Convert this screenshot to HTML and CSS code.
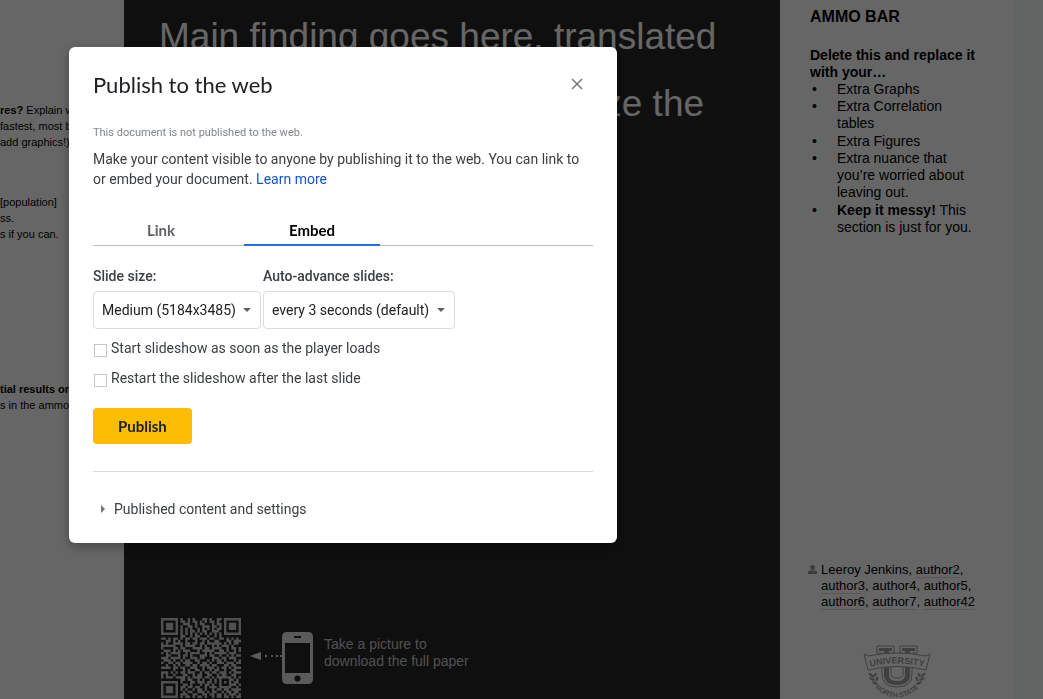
FILE: index.html
```html
<!DOCTYPE html>
<html lang="en">

<head>
    <meta charset="UTF-8">
    <meta name="viewport" content="width=device-width, initial-scale=1.0">
    <title>Publish to the web</title>
    <link rel="stylesheet" href="styles.css">
</head>

<body>

    <!-- Poster slide -->
    <main class="slide">
        <section class="intro-bar">
            <p class="note"><b>res?</b> Explain w<br>fastest, most br<br>add graphics!).</p>
            <p class="note">[population]<br>ss.<br>s if you can.</p>
            <p class="note"><b>tial results on</b><br>s in the ammo</p>
        </section>

        <section class="finding">
            <h1>Main finding goes here, translated<br>into plain English. Emphasize the</h1>
            <div class="download">
                <svg id="qr" class="qr" viewBox="0 0 33 33" aria-label="QR code"></svg>
                <svg class="arrow" viewBox="0 0 32 10">
                    <path d="M0 5L11 1V9Z" />
                    <path d="M15 4h2v2h-2zM21 4h2v2h-2zM26 4h2v2h-2zM30 4h2v2h-2z" />
                </svg>
                <svg class="phone" viewBox="0 0 31 52">
                    <path fill-rule="evenodd" d="M5 0H26Q31 0 31 5V47Q31 52 26 52H5Q0 52 0 47V5Q0 0 5 0ZM3 11V41H28V11ZM12 4V6H19V4ZM15.500 43.500A3 3 0 1 0 15.500 49.500A3 3 0 1 0 15.500 43.500Z" />
                </svg>
                <p>Take a picture to<br>download the full paper</p>
            </div>
        </section>

        <section class="ammo-bar">
            <h2>AMMO BAR</h2>
            <h3>Delete this and replace it with your…</h3>
            <ul>
                <li>Extra Graphs</li>
                <li>Extra Correlation tables</li>
                <li>Extra Figures</li>
                <li>Extra nuance that you’re worried about leaving out.</li>
                <li><b>Keep it messy!</b> This section is just for you.</li>
            </ul>
            <div class="authors">
                <svg class="person" viewBox="0 0 9 10">
                    <circle cx="4.500" cy="2.500" r="2.500" />
                    <path d="M0 9V7Q0 5.500 2 5.500H7Q9 5.500 9 7V9Z" />
                </svg>
                <p>Leeroy Jenkins, <u>author2</u>, <u>author3</u>, author4, author5, <u>author6</u>, <u>author7</u>, <u>author42</u></p>
            </div>
            <svg class="university" viewBox="0 0 68 54">
                <defs>
                    <path id="banner-line" d="M6 22Q34 15 62 22" />
                    <path id="bottom-line" d="M11 42Q34 63 57 42" />
                </defs>
                <path class="letter" d="M14 1H31V8H28V29Q28 33 34 33Q40 33 40 29V8H37V1H54V8H49V29Q49 42 34 42Q19 42 19 29V8H14Z" />
                <path class="letter-inner" d="M16 3H29V6H26V30Q26 36 34 36Q42 36 42 30V6H39V3H52V6H47V29Q47 40 34 40Q21 40 21 29V6H16Z" />
                <path class="banner" d="M1 9L5 11Q34 5 63 11L67 9L63 25Q34 18 5 25Z" />
                <text class="banner-text"><textPath href="#banner-line" startOffset="50%">UNIVERSITY</textPath></text>
                <g class="leaves">
                    <ellipse cx="8" cy="30" rx="3" ry="1.300" transform="rotate(35 8 30)" />
                    <ellipse cx="9" cy="34" rx="3" ry="1.300" transform="rotate(25 9 34)" />
                    <ellipse cx="12" cy="38" rx="3" ry="1.300" transform="rotate(25 12 38)" />
                    <ellipse cx="12" cy="30" rx="2.500" ry="1.200" transform="rotate(-60 12 30)" />
                    <ellipse cx="14" cy="34" rx="2.500" ry="1.200" transform="rotate(-70 14 34)" />
                    <ellipse cx="60" cy="30" rx="3" ry="1.300" transform="rotate(-35 60 30)" />
                    <ellipse cx="59" cy="34" rx="3" ry="1.300" transform="rotate(-25 59 34)" />
                    <ellipse cx="56" cy="38" rx="3" ry="1.300" transform="rotate(-25 56 38)" />
                    <ellipse cx="56" cy="30" rx="2.500" ry="1.200" transform="rotate(60 56 30)" />
                    <ellipse cx="54" cy="34" rx="2.500" ry="1.200" transform="rotate(70 54 34)" />
                </g>
                <text class="bottom-text"><textPath href="#bottom-line" startOffset="50%">NORTH STATE</textPath></text>
            </svg>
        </section>
        <div class="canvas-edge"></div>
    </main>

    <div class="scrim"></div>

    <!-- Publish dialog -->
    <div class="dialog" role="dialog" aria-labelledby="dialog-title">
        <header class="dialog-header">
            <h2 id="dialog-title">Publish to the web</h2>
            <button class="close-btn" type="button" aria-label="Close">
                <svg viewBox="0 0 12 12"><path d="M1 1L11 11M11 1L1 11" /></svg>
            </button>
        </header>

        <p class="status">This document is not published to the web.</p>
        <p class="description">Make your content visible to anyone by publishing it to the web. You can link to or embed your document. <a href="#">Learn more</a></p>

        <div class="tabs" role="tablist">
            <button class="tab" type="button" role="tab" aria-selected="false">Link</button>
            <button class="tab active" type="button" role="tab" aria-selected="true">Embed</button>
        </div>

        <form>
            <div class="fields">
                <div class="field">
                    <label for="slide-size">Slide size:</label>
                    <select id="slide-size">
                        <option>Medium (5184x3485)</option>
                    </select>
                </div>
                <div class="field">
                    <label for="advance">Auto-advance slides:</label>
                    <select id="advance">
                        <option>every 3 seconds (default)</option>
                    </select>
                </div>
            </div>
            <div class="check">
                <input type="checkbox" id="start">
                <label for="start">Start slideshow as soon as the player loads</label>
            </div>
            <div class="check">
                <input type="checkbox" id="restart">
                <label for="restart">Restart the slideshow after the last slide</label>
            </div>
            <button class="publish-btn" type="button">Publish</button>
        </form>

        <details class="settings">
            <summary>Published content and settings</summary>
        </details>
    </div>

    <script src="qr.js"></script>
</body>

</html>
```
FILE: styles.css
```css
* {
    margin: 0;
    padding: 0;
    box-sizing: border-box;
}

body {
    height: 100vh;
    overflow: hidden;
    font-family: Roboto, sans-serif;
    font-size: 14px;
    color: #3c4043;
}

/* Poster slide */
.slide {
    display: grid;
    grid-template-columns: 124px 1fr 235px 28px;
    height: 100vh;
    background: #fff;
    color: #000;
    font-family: "Liberation Sans", Arial, sans-serif;
}

.intro-bar {
    overflow: hidden;
    padding-top: 102px;
}

.note {
    font-size: 11px;
    line-height: 16px;
    white-space: nowrap;
    margin-bottom: 44px;
}

.note:nth-child(2) {
    margin-bottom: 139px;
}

.finding {
    display: flex;
    flex-direction: column;
    justify-content: space-between;
    padding: 3px 35px 1px;
    background: #262626;
    color: #fff;
    overflow: hidden;
}

.finding h1 {
    font-size: 37px;
    font-weight: normal;
    line-height: 67px;
    white-space: nowrap;
}

.download {
    display: flex;
    align-items: center;
    color: #c8c8c8;
    line-height: 17px;
    fill: #e0e0e0;
}

.download p {
    margin-bottom: 10px;
}

.qr {
    width: 80px;
    height: 80px;
    margin: 0 9px 0 2px;
    fill: #c8c8c8;
}

.arrow {
    width: 32px;
    height: 10px;
    margin-bottom: 4px;
}

.phone {
    width: 31px;
    height: 52px;
    margin-right: 11px;
}

.ammo-bar {
    display: flex;
    flex-direction: column;
    padding: 8px 35px 0 30px;
    font-size: 14px;
    line-height: 17px;
}

.ammo-bar h2 {
    font-size: 16px;
    line-height: 18px;
    margin-bottom: 21px;
}

.ammo-bar h3 {
    font-size: 14px;
}

.ammo-bar ul {
    padding-left: 27px;
    list-style: none;
}

.ammo-bar li:nth-child(even) {
    margin-bottom: 1px;
}

.ammo-bar li::before {
    content: "•";
    float: left;
    margin-left: -25px;
}

.authors {
    display: flex;
    gap: 4px;
    margin-top: auto;
    margin-left: -2px;
    font-size: 13px;
    line-height: 16px;
}

.authors u {
    text-decoration: none;
    border-bottom: 1px solid #f0d4d4;
}

.person {
    flex: none;
    width: 9px;
    height: 10px;
    margin-top: 3px;
    fill: #999;
}

.university {
    width: 68px;
    height: 54px;
    margin: 35px 0 0 53px;
}

.letter,
.banner {
    fill: #fff;
    stroke: #a0a0a0;
}

.letter-inner,
.leaves {
    fill: #a0a0a0;
}

.banner-text,
.bottom-text {
    fill: #a0a0a0;
    font-weight: bold;
    text-anchor: middle;
}

.banner-text {
    font-size: 9px;
}

.bottom-text {
    font-size: 7px;
}

.canvas-edge {
    background: #f4f8f7;
}

.scrim {
    position: fixed;
    inset: 0;
    background: rgba(0, 0, 0, 0.6);
}

/* Dialog */
.dialog {
    position: fixed;
    top: 47px;
    left: 69px;
    width: 548px;
    max-width: 90vw;
    padding: 24px;
    border-radius: 6px;
    background: #fff;
    box-shadow: 0 4px 12px rgba(0, 0, 0, 0.3);
}

.dialog-header {
    display: flex;
    justify-content: space-between;
    align-items: center;
    margin-bottom: 26px;
}

.dialog-header h2 {
    font-family: Lato, sans-serif;
    font-size: 22px;
    font-weight: normal;
    line-height: 28px;
    color: #202124;
}

.close-btn {
    width: 32px;
    height: 24px;
    border: 0;
    background: none;
    cursor: pointer;
}

.close-btn svg {
    width: 12px;
    height: 12px;
    stroke: #777;
    stroke-width: 1.5;
}

.status {
    font-size: 11px;
    line-height: 16px;
    color: #80868b;
    margin-bottom: 8px;
}

.description {
    line-height: 20px;
    margin-bottom: 26px;
}

.description a {
    color: #1155cc;
    text-decoration: none;
}

.tabs {
    display: flex;
    gap: 15px;
    height: 31px;
    border-bottom: 1px solid #bdbdbd;
}

.tab {
    width: 136px;
    height: 31px;
    border: 0;
    border-bottom: 2px solid transparent;
    background: none;
    color: #5f6368;
    font-family: Lato, sans-serif;
    font-size: 15px;
    font-weight: bold;
    cursor: pointer;
}

.tab.active {
    border-color: #1a73e8;
    color: #000;
}

.fields {
    display: flex;
    gap: 2px;
    margin: 20px 0 9px;
}

.field {
    display: flex;
    flex-direction: column;
    gap: 5px;
}

.field label {
    font-weight: 500;
    line-height: 20px;
}

.field select {
    appearance: none;
    height: 38px;
    padding: 0 24px 0 8px;
    border: 1px solid #dadce0;
    border-radius: 4px;
    color: #202124;
    font: 14px Roboto, sans-serif;
    background: url("data:image/svg+xml,%3Csvg xmlns='http://www.w3.org/2000/svg' viewBox='0 0 8 4'%3E%3Cpath fill='%235f6368' d='M0 0H8L4 4Z'/%3E%3C/svg%3E") no-repeat right 9px center / 8px 4px;
}

.check {
    display: flex;
    align-items: center;
    gap: 4px;
    margin-bottom: 10px;
    line-height: 20px;
}

.check input {
    appearance: none;
    width: 13px;
    height: 13px;
    margin: 4px 0 0 1px;
    border: 1px solid #c6c6c6;
}

.publish-btn {
    height: 36px;
    margin-top: 10px;
    padding: 0 25px;
    border: 0;
    border-radius: 4px;
    background: #fbbc04;
    color: #202124;
    font-family: Lato, sans-serif;
    font-size: 15px;
    font-weight: bold;
    cursor: pointer;
}

.settings {
    margin-top: 27px;
    padding-top: 27px;
    border-top: 1px solid #dadce0;
}

.settings summary {
    display: flex;
    align-items: center;
    gap: 9px;
    padding-left: 8px;
    line-height: 20px;
}

.settings summary::before {
    content: "";
    border: solid transparent;
    border-width: 4px 0 4px 4px;
    border-left-color: #757575;
}
```
FILE: qr.js
```js
// one string per row, # is a filled module
const rows = [
    "#######.#..#.#...##.#..##.#######",
    "#.....#.##.#.##.#.#.##.#..#.....#",
    "#.###.#..###..#.##...#.##.#.###.#",
    "#.###.#.#..##.#..###.##.#.#.###.#",
    "#.###.#.#.#.#..#.#.#.#.##.#.###.#",
    "#.....#.#.#.##.#.##..###..#.....#",
    "#######.#.#.#.#.#.#.#.#.#.#######",
    "........##..#.##...#..#.#........",
    "##.#.##.#.##.##.###.##..##.#.#.#.",
    "..##.#.#..#...#..#.#..##...##.###",
    "#.#..####.##.##.##.######.#.#.##.",
    "######..#.####..#.#..#.#.###.#...",
    "#....##.##...####.##.####..#.##.#",
    ".###.#.#.###...#.#####..##.#..#.#",
    "#.#.####..#.####..#.#.#####.###..",
    "..##...#.##.#...###.##..#..#.#.##",
    "###.####.#..###.##...###.##.###..",
    ".###.#..#.##..##...#.#.##.#...#.#",
    "#..##.##.####..#.##.#..###.###.##",
    "..#..#.#..##.##.####.##...##.##..",
    "####.##.##..###..#.###.#.##.#.###",
    ".....#...#.#..##.#..#.##..#..##..",
    "###.#.#.##.###..#.##.##.###.#.###",
    "#.#..#...##..#.##..##..#.##..##..",
    "#.###.####.#.####.##.#.######.#.#",
    "........##.##..#.#..#.#.#...##.#.",
    "#######.#...##.###.##.#.#.#.#.##.",
    "#.....#..##.#...#.##.#..#...###.#",
    "#.###.#.##.##.##..#.###.#####..#.",
    "#.###.#.#.#..#.##.#..#.##.##.####",
    "#.###.#..#.##..###.#.##..#.##.##.",
    "#.....#.###..##..##.##.##.#.###.#",
    "#######.#.##.#.##.#..#.##.##.#.##"
];

const qr = document.getElementById('qr');
let d = '';
rows.forEach(function (row, y) {
    for (let x = 0; x < row.length; x++) {
        if (row[x] === '#') d += `M${x} ${y}h1v1h-1z`;
    }
});
const path = document.createElementNS('http://www.w3.org/2000/svg', 'path');
path.setAttribute('d', d);
qr.appendChild(path);
```
